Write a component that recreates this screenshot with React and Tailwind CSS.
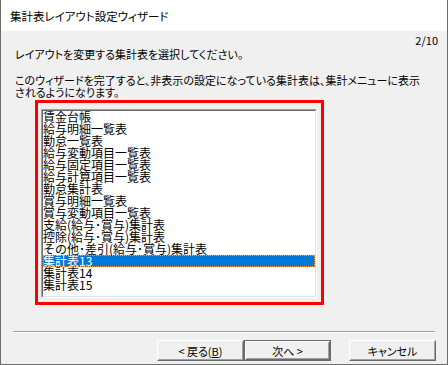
import React from 'react';

const items = [
  '賃金台帳',
  '給与明細一覧表',
  '勤怠一覧表',
  '給与変動項目一覧表',
  '給与固定項目一覧表',
  '給与計算項目一覧表',
  '勤怠集計表',
  '賞与明細一覧表',
  '賞与変動項目一覧表',
  '支給(給与･賞与)集計表',
  '控除(給与･賞与)集計表',
  'その他･差引(給与･賞与)集計表',
  '集計表13',
  '集計表14',
  '集計表15',
];

const SELECTED = 12;

// classic 3D push button
const Btn = ({ children, isDefault }) => (
  <div className={`w-[87px] h-[21px] ${isDefault ? 'border border-[#696969]' : ''}`}>
    <div className="h-full border border-t-white border-l-white border-r-[#696969] border-b-[#696969] bg-[#f0f0f0]">
      <div className="h-full flex items-center justify-center border border-t-[#f0f0f0] border-l-[#f0f0f0] border-r-[#a0a0a0] border-b-[#a0a0a0] text-[11px] leading-[12px]">
        {children}
      </div>
    </div>
  </div>
);

export default function App() {
  return (
    <div className="w-[448px] h-[365px] flex flex-col border-l border-r border-b border-[#6d6d6d] bg-[#f0f0f0] text-black font-['Noto_Sans_CJK_JP',sans-serif] [font-feature-settings:'palt']">
      {/* title */}
      <div className="h-[31px] shrink-0 bg-white flex items-center pl-[9px] text-[11.5px] leading-[12px]">
        集計表レイアウト設定ウィザード
      </div>

      <div className="mt-[3px] h-[12px] text-right pr-[9px] text-[11px] leading-[12px]">2/10</div>

      <div className="mt-[2px] pl-[14px] text-[11px] leading-[12px]">
        レイアウトを変更する集計表を選択してください。
      </div>

      <div className="mt-[14px] pl-[14px] pr-[20px] text-[11px] leading-[12px]">
        このウィザードを完了すると、非表示の設定になっている集計表は、集計メニューに表示
        <br />
        されるようになります。
      </div>

      {/* highlighted list */}
      <div className="mt-[2px] ml-[34px] w-[289px] h-[205px] shrink-0 border-[3px] border-[#ff0000] pl-[3px] pt-[6px]">
        <div className="w-[276px] h-[189px] border border-t-[#a0a0a0] border-l-[#a0a0a0] border-r-white border-b-white">
          <div className="h-full bg-white border border-t-[#696969] border-l-[#696969] border-r-[#e3e3e3] border-b-[#e3e3e3]">
            {items.map((name, i) => (
              <div
                key={name}
                className={`h-[12px] leading-[12px] text-[12px] whitespace-nowrap [font-feature-settings:normal] ${
                  i === SELECTED
                    ? 'bg-[#0078d7] text-white outline-1 outline-dotted outline-[#f5a04a] -outline-offset-1'
                    : ''
                }`}
              >
                {name}
              </div>
            ))}
          </div>
        </div>
      </div>

      {/* separator */}
      <div className="mt-[26px] mx-[12px] h-[2px] border-t border-t-[#a0a0a0] border-b border-b-white" />

      {/* buttons */}
      <div className="mt-[7px] flex justify-end pr-[11px]">
        <Btn>
          &lt; 戻る(<span className="underline">B</span>)
        </Btn>
        <Btn isDefault>次へ &gt;</Btn>
        <div className="w-[18px]" />
        <Btn>キャンセル</Btn>
      </div>
    </div>
  );
}
